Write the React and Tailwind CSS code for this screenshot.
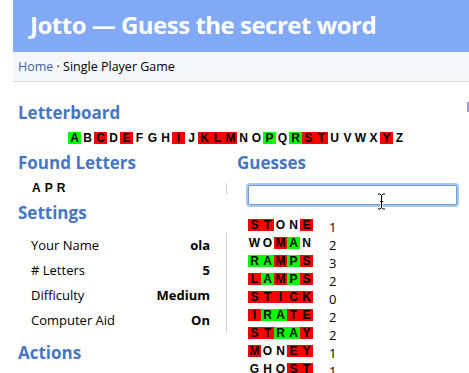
import React from "react";

const RED = "bg-[#ff0000]";
const GREEN = "bg-[#00ff00]";

const board = {
  A: "g", C: "r", E: "r", I: "r", K: "r", L: "r", M: "r",
  P: "g", R: "g", S: "r", T: "r", Y: "r",
};

const guesses = [
  ["STONE", "rrnnr", 1],
  ["WOMAN", "nnrgn", 2],
  ["RAMPS", "ggrgr", 3],
  ["LAMPS", "rgrgr", 2],
  ["STICK", "rrrrr", 0],
  ["IRATE", "rggrr", 2],
  ["STRAY", "rrggr", 2],
  ["MONEY", "rnnrr", 1],
  ["GHOST", "nnnrr", 1],
];

const settings = [
  ["Your Name", "ola"],
  ["# Letters", "5"],
  ["Difficulty", "Medium"],
  ["Computer Aid", "On"],
];

function Cell({ ch, mark }) {
  const bg = mark === "g" ? GREEN : mark === "r" ? RED : "";
  return (
    <span className={`w-[13px] h-[12px] flex items-center justify-center text-[12px] leading-[12px] font-bold text-black ${bg}`}>
      {ch}
    </span>
  );
}

function Heading({ children }) {
  return (
    <h2 className="text-[17px] leading-[20px] font-bold text-[#4677c4]">{children}</h2>
  );
}

export default function App() {
  const letters = "ABCDEFGHIJKLMNOPQRSTUVWXYZ".split("");

  return (
    <div className="min-h-screen bg-white pl-[13px] font-['Open_Sans',sans-serif] text-black">
      {/* Header */}
      <div className="h-[52px] bg-[#82a9f5] pl-[17px] pt-[13px]">
        <h1 className="text-[24px] leading-[24px] font-bold tracking-[-0.5px] text-white whitespace-nowrap">
          Jotto — Guess the secret word
        </h1>
      </div>

      {/* Breadcrumb */}
      <div className="h-[30px] bg-[#f4f7fa] border-b border-[#dadde0] pl-[5px] pt-[8px] text-[12.5px] leading-[14px]">
        <span className="text-[#45609c]">Home</span> · Single Player Game
      </div>

      {/* Letterboard */}
      <div className="mt-[21px] pl-[5px] flex justify-between">
        <Heading>Letterboard</Heading>
        <span className="w-[2px] h-[10px] mt-[-1px] bg-[#a996dc]"></span>
      </div>
      <div className="mt-[9px] pl-[55px] flex font-['Liberation_Sans',Arial,sans-serif]">
        {letters.map((l) => (
          <Cell key={l} ch={l} mark={board[l]} />
        ))}
      </div>

      <div className="mt-[9px] flex">
        {/* Left column */}
        <div className="w-[214px] shrink-0">
          <div className="pl-[5px]">
            <Heading>Found Letters</Heading>
          </div>
          <div className="mt-[10px] h-[11px] border-r border-[#cfcfcf] pl-[19px] text-[12px] leading-[11px] font-bold tracking-[4px] font-['Liberation_Sans',Arial,sans-serif]">
            APR
          </div>

          <div className="mt-[9px] pl-[5px]">
            <Heading>Settings</Heading>
          </div>
          <div className="mt-[10px] border-r border-[#cfcfcf] pl-[18px] pr-[16px]">
            {settings.map(([k, v]) => (
              <div key={k} className="h-[25px] flex items-center justify-between text-[13px] leading-[25px]">
                <span>{k}</span>
                <span className="font-bold">{v}</span>
              </div>
            ))}
          </div>

          <div className="mt-[10px] pl-[5px]">
            <Heading>Actions</Heading>
          </div>
        </div>

        {/* Right column */}
        <div className="flex-1 pl-[10px]">
          <Heading>Guesses</Heading>
          <div className="relative mt-[12px] ml-[11px] w-[209px] h-[20px] border border-[#6f9bd9] rounded-[2px] bg-white ring-2 ring-[#a9c6ee]">
            <svg className="absolute left-[128px] top-[7px]" width="9" height="17" viewBox="0 0 9 17">
              <path d="M1 1h2l1.5 1.5L6 1h2M4.5 2.5v12M1 16h2l1.5-1.5L6 16h2M3 8.5h3" fill="none" stroke="#fff" strokeWidth="2.5" />
              <path d="M1 1h2l1.5 1.5L6 1h2M4.5 2.5v12M1 16h2l1.5-1.5L6 16h2M3 8.5h3" fill="none" stroke="#000" strokeWidth="1" />
            </svg>
          </div>

          <div className="mt-[11px] ml-[11px]">
            {guesses.map(([word, marks, score]) => (
              <div key={word} className="h-[18px] flex items-center">
                <div className="flex font-['Liberation_Sans',Arial,sans-serif]">
                  {word.split("").map((c, i) => (
                    <Cell key={i} ch={c} mark={marks[i]} />
                  ))}
                </div>
                <span className="ml-[16px] pt-[3px] text-[13px] leading-[14px]">{score}</span>
              </div>
            ))}
          </div>
        </div>
      </div>
    </div>
  );
}
